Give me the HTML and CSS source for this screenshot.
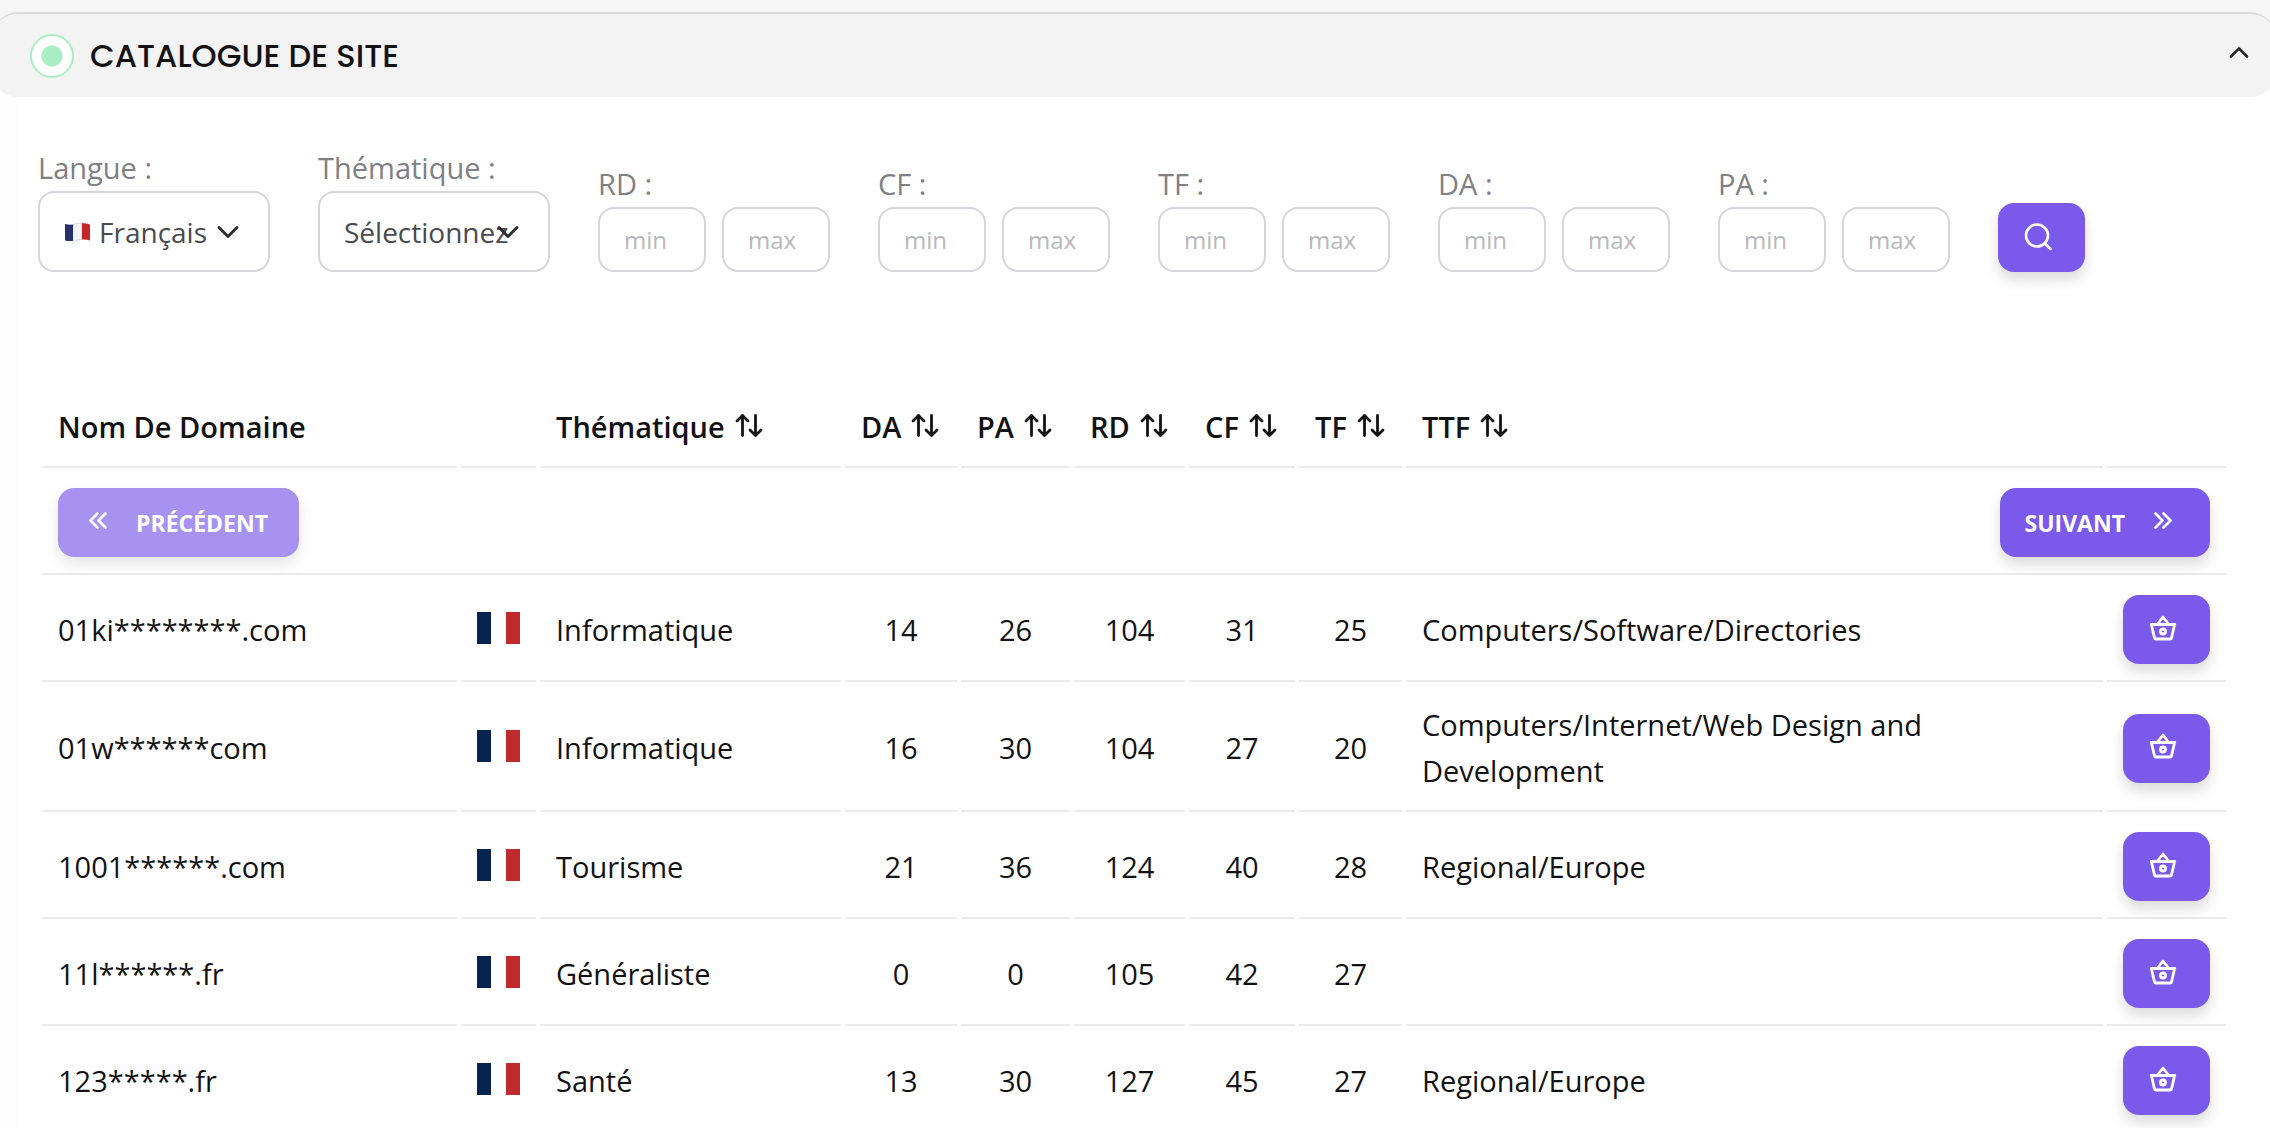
FILE: index.html
```html
<!DOCTYPE html>
<html lang="fr">
<head>
<meta charset="utf-8">
<meta name="viewport" content="width=device-width, initial-scale=1">
<title>Catalogue de site</title>
<link rel="stylesheet" href="styles.css">
</head>
<body>
<svg class="sprite" aria-hidden="true">
  <symbol id="i-sort" viewBox="0 0 32 32" stroke-width="2.8"><path d="M9.500 26.500V6.500M4 12l5.500-5.500L15 12M22.500 6.500v20M17 21l5.500 5.500L28 21"/></symbol>
  <symbol id="i-basket" viewBox="0 0 32 32" stroke-width="2.8"><path d="M4.200 12.500h23.600M4.500 13l3 13q.3 1 1.500 1h14q1.200 0 1.500-1l3-13M10.500 12l5.500-7 5.500 7"/><circle cx="16" cy="19.500" r="2.500"/></symbol>
  <symbol id="i-search" viewBox="0 0 32 32" stroke-width="2.6"><circle cx="15" cy="15.500" r="11"/><path d="M23.500 24l5 5"/></symbol>
  <symbol id="i-prev" viewBox="0 0 32 32" stroke-width="2.6"><path d="M15.500 8.500L8.500 15.500l7 7M23.500 8.500l-7 7 7 7"/></symbol>
  <symbol id="i-next" viewBox="0 0 32 32" stroke-width="2.6"><path d="M8.500 8.500l7 7-7 7M16.500 8.500l7 7-7 7"/></symbol>
  <symbol id="i-down" viewBox="0 0 24 14"><path d="M3 2.500l9 9 9-9"/></symbol>
  <symbol id="i-flag" viewBox="0 0 43 32"><path fill="#fff" d="M0 0h43v32H0z"/><path fill="#08234d" d="M0 0h14v32H0z"/><path fill="#c02c2d" d="M29 0h14v32H29z"/></symbol>
</svg>

<main class="panel">
  <header class="panel-header">
    <span class="status" aria-hidden="true"></span>
    <h1 class="panel-title">CATALOGUE DE SITE</h1>
    <button class="collapse" type="button" aria-label="Replier"><svg viewBox="0 0 24 16"><path stroke-width="2.6" d="M4 12.500l8-8 8 8"/></svg></button>
  </header>

  <div class="content">
    <form class="filters">
      <div class="field">
        <label for="langue">Langue :</label>
        <div class="select select--flag">
          <select id="langue"><option>Français</option></select>
          <svg class="select-flag" viewBox="0 0 26 18"><path fill="#f4f4f6" stroke="#c9c9cd" stroke-width=".6" d="M8 1.500Q13 0 17 0v16.500Q13 17 8 18z"/><path fill="#26306f" d="M0 1Q4 2 8 1.500V18Q4 18.500 0 17.500z"/><path fill="#c4262e" d="M17 0Q21 0 25 1.500v16Q21 16 17 16.500z"/></svg>
          <svg class="select-arrow"><use href="#i-down"/></svg>
        </div>
      </div>
      <div class="field">
        <label for="thematique">Thématique :</label>
        <div class="select">
          <select id="thematique"><option>Sélectionnez</option></select>
          <svg class="select-arrow"><use href="#i-down"/></svg>
        </div>
      </div>
      <div class="field"><label for="rd">RD :</label><div class="range"><input id="rd" placeholder="min"><input placeholder="max" aria-label="RD max"></div></div>
      <div class="field"><label for="cf">CF :</label><div class="range"><input id="cf" placeholder="min"><input placeholder="max" aria-label="CF max"></div></div>
      <div class="field"><label for="tf">TF :</label><div class="range"><input id="tf" placeholder="min"><input placeholder="max" aria-label="TF max"></div></div>
      <div class="field"><label for="da">DA :</label><div class="range"><input id="da" placeholder="min"><input placeholder="max" aria-label="DA max"></div></div>
      <div class="field"><label for="pa">PA :</label><div class="range"><input id="pa" placeholder="min"><input placeholder="max" aria-label="PA max"></div></div>
      <button class="btn" type="submit" aria-label="Rechercher"><svg class="icon"><use href="#i-search"/></svg></button>
    </form>

    <table class="sites">
      <colgroup><col class="c-name"><col class="c-flag"><col class="c-theme"><col class="c-da"><col class="c-pa"><col class="c-rd"><col class="c-cf"><col class="c-tf"><col><col class="c-action"></colgroup>
      <thead>
        <tr>
          <th>Nom De Domaine</th>
          <th></th>
          <th><button class="sort" type="button">Thématique<svg class="icon"><use href="#i-sort"/></svg></button></th>
          <th><button class="sort" type="button">DA<svg class="icon"><use href="#i-sort"/></svg></button></th>
          <th><button class="sort" type="button">PA<svg class="icon"><use href="#i-sort"/></svg></button></th>
          <th><button class="sort" type="button">RD<svg class="icon"><use href="#i-sort"/></svg></button></th>
          <th><button class="sort" type="button">CF<svg class="icon"><use href="#i-sort"/></svg></button></th>
          <th><button class="sort" type="button">TF<svg class="icon"><use href="#i-sort"/></svg></button></th>
          <th><button class="sort" type="button">TTF<svg class="icon"><use href="#i-sort"/></svg></button></th>
          <th></th>
        </tr>
      </thead>
      <tbody>
        <tr>
          <td colspan="10">
            <div class="pager">
              <button class="btn" type="button" disabled><svg class="icon"><use href="#i-prev"/></svg>PRÉCÉDENT</button>
              <button class="btn" type="button">SUIVANT<svg class="icon"><use href="#i-next"/></svg></button>
            </div>
          </td>
        </tr>
        <tr>
          <td>01ki********.com</td><td><svg class="flag"><use href="#i-flag"/></svg></td><td>Informatique</td>
          <td class="num">14</td><td class="num">26</td><td class="num">104</td><td class="num">31</td><td class="num">25</td>
          <td>Computers/Software/Directories</td>
          <td><button class="btn" type="button" aria-label="Ajouter au panier"><svg class="icon"><use href="#i-basket"/></svg></button></td>
        </tr>
        <tr>
          <td>01w******com</td><td><svg class="flag"><use href="#i-flag"/></svg></td><td>Informatique</td>
          <td class="num">16</td><td class="num">30</td><td class="num">104</td><td class="num">27</td><td class="num">20</td>
          <td>Computers/Internet/Web Design and Development</td>
          <td><button class="btn" type="button" aria-label="Ajouter au panier"><svg class="icon"><use href="#i-basket"/></svg></button></td>
        </tr>
        <tr>
          <td>1001******.com</td><td><svg class="flag"><use href="#i-flag"/></svg></td><td>Tourisme</td>
          <td class="num">21</td><td class="num">36</td><td class="num">124</td><td class="num">40</td><td class="num">28</td>
          <td>Regional/Europe</td>
          <td><button class="btn" type="button" aria-label="Ajouter au panier"><svg class="icon"><use href="#i-basket"/></svg></button></td>
        </tr>
        <tr>
          <td>11l******.fr</td><td><svg class="flag"><use href="#i-flag"/></svg></td><td>Généraliste</td>
          <td class="num">0</td><td class="num">0</td><td class="num">105</td><td class="num">42</td><td class="num">27</td>
          <td></td>
          <td><button class="btn" type="button" aria-label="Ajouter au panier"><svg class="icon"><use href="#i-basket"/></svg></button></td>
        </tr>
        <tr>
          <td>123*****.fr</td><td><svg class="flag"><use href="#i-flag"/></svg></td><td>Santé</td>
          <td class="num">13</td><td class="num">30</td><td class="num">127</td><td class="num">45</td><td class="num">27</td>
          <td>Regional/Europe</td>
          <td><button class="btn" type="button" aria-label="Ajouter au panier"><svg class="icon"><use href="#i-basket"/></svg></button></td>
        </tr>
      </tbody>
    </table>
  </div>
</main>
</body>
</html>
```

FILE: styles.css
```css
* { box-sizing: border-box; }

html { scrollbar-width: none; }

body {
  margin: 0;
  background: #fdfdfd;
  color: #121214;
  font-family: "Open Sans", "Noto Sans", sans-serif;
  font-size: 29px;
  line-height: 46px;
}

button, input, select { font: inherit; color: inherit; }
button { cursor: pointer; }

svg {
  display: block;
  flex: none;
  fill: none;
  stroke: currentColor;
  stroke-width: 3;
  stroke-linecap: round;
  stroke-linejoin: round;
}

.sprite { display: none; }

.panel {
  overflow: hidden;
  padding-top: 12px;
  background: linear-gradient(#f6f6f6, #f6f6f6) top / 100% 48px no-repeat;
}

.panel-header {
  display: flex;
  align-items: center;
  gap: 16px;
  height: 85px;
  margin: 0 -6px 0 -8px;
  padding: 0 25px 0 38px;
  border-top: 2px solid #dcdcdc;
  border-radius: 26px;
  background: #f3f3f3;
}

.status {
  width: 44px;
  height: 44px;
  border: 2px solid #a9edc3;
  border-radius: 50%;
  background: radial-gradient(circle, #a9edc3 10px, #fff 11px);
}

.panel-title {
  margin: 0;
  font-family: Poppins, Lato, sans-serif;
  font-size: 32px;
  font-weight: 500;
}

.collapse {
  margin-left: auto;
  padding: 0 0 8px;
  border: 0;
  background: none;
  color: #23272f;
}
.collapse svg { width: 24px; height: 16px; }

.content {
  margin-left: 19px;
  padding: 48px 40px 0 19px;
  background: #fff;
}

.filters {
  display: flex;
  align-items: flex-end;
  gap: 48px;
}

.field { width: 232px; }
.field label { display: block; color: #808084; }

.select { display: grid; align-items: center; }
.select > * { grid-area: 1 / 1; }
.select select {
  width: 100%;
  height: 81px;
  padding: 0 24px;
  appearance: none;
  border: 2px solid #d4d6dc;
  border-radius: 16px;
  background: #fff;
  color: #4a4b50;
  font-size: 28px;
}
.select--flag select { padding: 0 0 0 59px; }
.select-flag { width: 26px; height: 18px; margin-left: 27px; stroke: none; pointer-events: none; }
.select-arrow {
  justify-self: end;
  width: 24px;
  height: 14px;
  margin-right: 30px;
  color: #2c2d33;
  pointer-events: none;
}

.range { display: flex; gap: 16px; }
.range input {
  width: 108px;
  height: 65px;
  padding: 0 24px;
  border: 2px solid #d4d6dc;
  border-radius: 16px;
  background: #fff;
  font-size: 24px;
}
.range input::placeholder { color: #b6b8bc; opacity: 1; }

.btn {
  display: flex;
  align-items: center;
  gap: 22px;
  height: 69px;
  padding: 0 31px 0 24px;
  border: 0;
  border-radius: 16px;
  background: #7b5aeb;
  color: #fff;
  font-size: 23px;
  font-weight: 700;
  box-shadow: 0 8px 14px rgba(0, 0, 0, .14);
}
.btn:disabled { opacity: .66; }

.icon { width: 32px; height: 32px; margin-bottom: 4px; }

.sites {
  width: 100%;
  margin-top: 112px;
  table-layout: fixed;
  border-spacing: 4px;
}
.c-name { width: 415px; }
.c-flag { width: 75px; }
.c-theme { width: 301px; }
.c-da { width: 112px; }
.c-pa { width: 109px; }
.c-rd { width: 111px; }
.c-cf { width: 106px; }
.c-tf { width: 103px; }
.c-action { width: 119px; }

.sites th, .sites td {
  padding: 16px;
  border-bottom: 2px solid #ebebeb;
  text-align: left;
}
.sites th { font-weight: 600; }
.sites .num { text-align: center; }

.sort {
  display: flex;
  align-items: center;
  gap: 8px;
  padding: 0;
  border: 0;
  background: none;
}

.pager { display: flex; justify-content: space-between; }

.flag { width: 43px; height: 32px; margin-bottom: 4px; stroke: none; }
```
